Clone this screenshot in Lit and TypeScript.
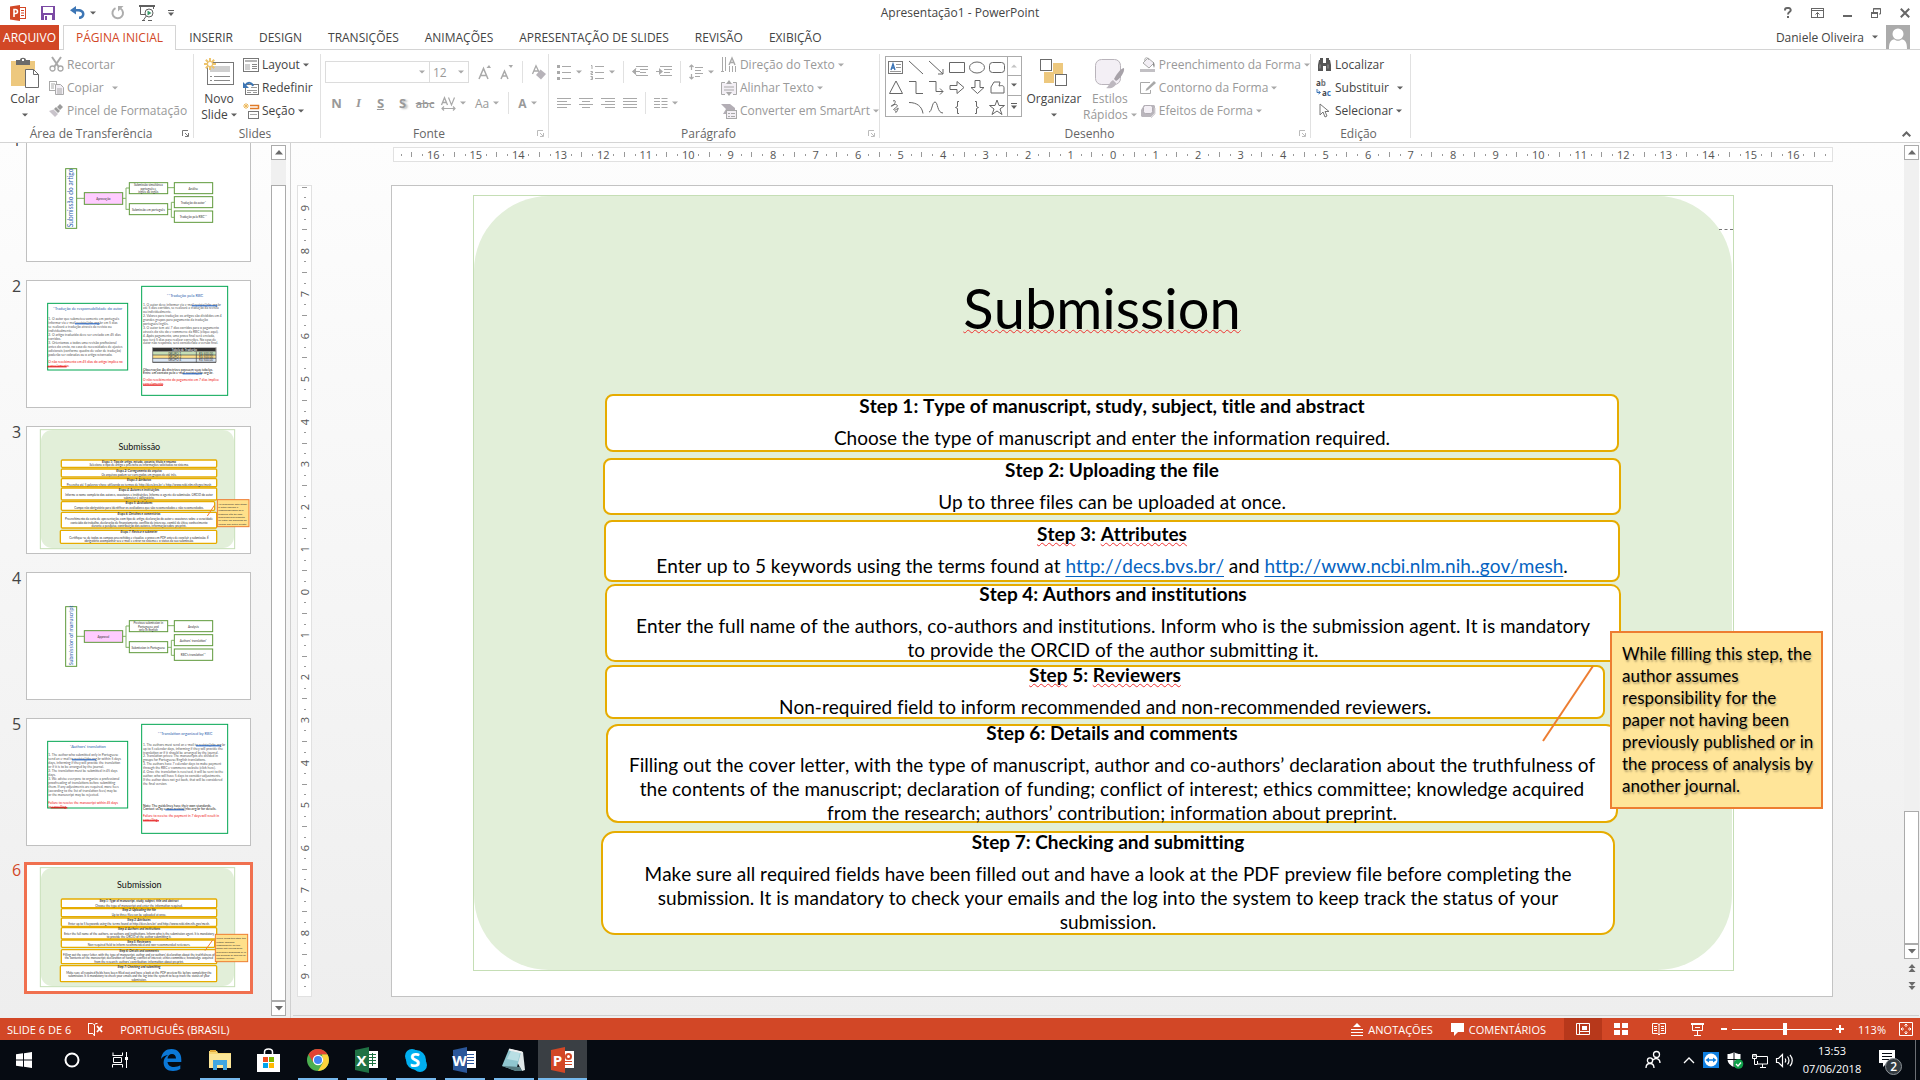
import { LitElement, html, svg, css, nothing } from "lit";
import { customElement, property, state } from "lit/decorators.js";
import { classMap } from "lit/directives/class-map.js";
import { styleMap } from "lit/directives/style-map.js";

/* ------------------------------------------------------------------ icons */

const G = "#a9a9a9";
const D = "#5f5f5f";

type Glyph = [number, number, unknown];

const line = (d: string, c = D, w = 1) => svg`<path d=${d} fill="none" stroke=${c} stroke-width=${w}/>`;
const area = (d: string, c = D) => svg`<path d=${d} fill=${c}/>`;
const rect = (x: number, y: number, w: number, h: number, c = D) =>
  svg`<rect x=${x} y=${y} width=${w} height=${h} fill=${c}/>`;
const frame = (x: number, y: number, w: number, h: number, c = D, f = "#fff") =>
  svg`<rect x=${x + 0.5} y=${y + 0.5} width=${w - 1} height=${h - 1} fill=${f} stroke=${c}/>`;

const officeTile = (c: string, inner: unknown) => svg`
  ${frame(12, 5, 12, 17, "#fff", "#fff")}
  ${inner}
  <path d="M1 4 15 1v26L1 24z" fill=${c}/>`;

const ICONS: Record<string, Glyph> = {
  ppt: [16, 16, svg`${rect(8, 2, 8, 12, "#d24726")}${rect(9, 3, 6, 10, "#fff")}${area("M0 1.600 10 0v16L0 14.400z", "#d24726")}
    ${line("M4 12V4.500h1.500a2 2 0 0 1 0 4H4", "#fff", 1.6)}${line("M11 5.500h3M11 8h3M11 10.500h3", "#d24726")}`],
  save: [14, 14, svg`${area("M0 0h14v14H0z", "#7b4aa4")}${rect(2, 1, 10, 6, "#fff")}${rect(3, 9, 8, 5, "#fff")}${rect(4, 10, 2, 4, "#7b4aa4")}`],
  undo: [15, 13, svg`${area("M6 0v3h2c4 0 6.500 2 6.500 5S12 13 9 13v-2.500c2 0 3-1 3-2.500S10.500 5.500 8 5.500H6v3L0 4.200z", "#3d76b5")}`],
  redo: [13, 13, svg`${line("M4.500 2.200A5.300 5.300 0 1 0 9.500 2.500", "#adadad", 2)}${area("M7 0h5.500L7 5.500z", "#adadad")}`],
  show: [16, 16, svg`${rect(0, 0, 16, 2)}${line("M1.500 2v7.500H6M14.500 2v2M8 10l-3.500 5M3 15.500h3M9 15.500h4")}
    <circle cx="10" cy="8" r="4" fill="#fff" stroke=${D}/>${area("M8.500 5.500v5l4-2.500z", "#3c9a6b")}`],
  customize: [6, 6, svg`${rect(0, 0, 6, 1)}${area("M0 2.500h6L3 6z")}`],
  caret: [6, 4, svg`${area("M0 .5h6L3 3.500z")}`],
  caretG: [6, 4, svg`${area("M0 .5h6L3 3.500z", G)}`],
  caretUp: [6, 4, svg`${area("M0 3.500h6L3 .5z", "#c4c4c4")}`],
  up: [8, 5, svg`${area("M4 0 8 4.500H0z", "#6a6a6a")}`],
  down: [8, 5, svg`${area("M4 4.500 8 0H0z", "#6a6a6a")}`],
  pageUp: [8, 8, svg`${area("M4 0 7.500 4h-7zM4 4l3.500 4h-7z", "#6a6a6a")}`],
  pageDown: [8, 8, svg`${area("M4 4 7.500 0h-7zM4 8l3.500-4h-7z", "#6a6a6a")}`],
  help: [8, 11, svg`${line("M1 3.500V3a2 2 0 0 1 2-2h2a2 2 0 0 1 1 3.500C4.500 5.500 4 6 4 7.500", "#666", 2)}${rect(3, 9, 2, 2, "#666")}`],
  ribbonOpt: [13, 10, svg`${frame(0, 0, 13, 10, "#666")}${line("M0 2.500h13M6.500 9V4.500M4.500 6.500l2-2 2 2", "#666")}`],
  minimize: [9, 10, svg`${rect(0, 7, 9, 2, "#666")}`],
  restore: [10, 10, svg`${line("M2.500 4V.5h7v5.500H8M2 1h8", "#666")}${frame(0, 4, 7, 6, "#666")}${rect(0, 4, 7, 2, "#666")}`],
  close: [10, 10, svg`${line("M.8.8l8.400 8.400M9.200.8.8 9.200", "#666", 2)}`],
  avatar: [24, 24, svg`${rect(0, 0, 24, 24, "#ababab")}<circle cx="12" cy="9" r="5.500" fill="#fff"/>${area("M3 24c0-7 2-9.500 5.500-9.500 2 1.800 5 1.800 7 0C19 14.500 21 17 21 24z", "#fff")}`],
  collapse: [9, 6, svg`${line("M.7 5.300 4.500 1.500l3.800 3.800", "#666", 2)}`],
  launcher: [7, 7, svg`${line("M.5 6V.5H6", "#777")}${line("M3 3l3 3M6.500 3v3.500H3", "#777")}`],
  launcherG: [7, 7, svg`${line("M.5 6V.5H6", "#bbb")}${line("M3 3l3 3M6.500 3v3.500H3", "#bbb")}`],
  paste: [28, 30, svg`${area("M0 3h24v25H0z", "#edc87e")}${area("M5 2h4c0-3 6-3 6 0h4v5H5z", "#6b6b6b")}${rect(11, 1, 2, 2, "#fff")}
    ${area("M14.500 11.500h8l5 5v13h-13z", "#fff")}${line("M14.500 11.500h8l5 5v13h-13zM22.500 11.500v5h5", "#6b6b6b")}`],
  cut: [15, 15, svg`${line("M3 0l6.500 9.500M12 0 5.500 9.500", G, 2)}<circle cx="3.500" cy="11.500" r="2.500" fill="none" stroke=${G} stroke-width="1.300"/><circle cx="11.500" cy="11.500" r="2.500" fill="none" stroke=${G} stroke-width="1.300"/>`],
  copy: [15, 14, svg`${frame(0, 0, 8, 10, G)}${area("M6.500 3.500h5l3 3v7h-8z", "#f3eff5")}${line("M6.500 3.500h5l3 3v7h-8zM8 8h5M8 10h5M8 12h5M2 3h4M2 5h3M2 7h3", G)}`],
  brush: [15, 13, svg`${area("M11 0l3 3-3 3-3-3zM7 3l4 4-2 2-4-4z", "#9b9b9b")}${area("M4.500 5.500 9 10l-3 3-6-6z", "#c9c4cb")}`],
  newSlide: [30, 27, svg`${frame(3, 4, 27, 23, "#777")}${rect(6, 8, 20, 6, "#cfcfcf")}${line("M6 18.500h2M10 18.500h16M6 22.500h2M10 22.500h16", "#8a8a8a")}
    ${line("M6 0v12M0 6h12M1.800 1.800l8.400 8.400M10.200 1.800l-8.400 8.400", "#edc46d", 2)}<circle cx="6" cy="6" r="2" fill="#fff"/>`],
  layout: [16, 14, svg`${frame(0, 0, 16, 14, "#777")}${rect(2, 2, 12, 2, "#b5b5b5")}${rect(2, 6, 5, 6, "#cfcfcf")}${line("M9 6.500h5M9 8.500h5M9 10.500h5", "#888")}`],
  reset: [16, 14, svg`${frame(2, 3, 14, 11, "#777")}${line("M8 6.500h6M4 9.500h10M4 11.500h4M10 11.500h4", "#999")}${line("M10 5C9 1.500 5 .5 2.500 4", "#3d76b5", 2)}${area("M0 1v6h6z", "#3d76b5")}`],
  section: [16, 16, svg`${line("M3 0v6M0 3h6M1 1l4 4M5 1 1 5", "#edb95d")}${line("M7 2.500h8.500v3H7", "#e07b29", 1.5)}${frame(5, 8, 11, 8, "#777")}${line("M7 11.500h7", "#aaa")}`],
  growA: [13, 15, svg`${line("M1 14 5.500 3.500 10 14M2.600 10.500h5.800", G, 1.500)}${area("M8.500 3 11 0l2 3z", G)}`],
  shrinkA: [13, 15, svg`${line("M1 14 4.500 6 8 14M2.200 11h4.600", G, 1.500)}${area("M8.500 0H13l-2 3z", G)}`],
  eraser: [14, 15, svg`${line("M.5 9 4 .8 7 7M2 6h4", G, 1.300)}${area("M8.500 4.500 14 9l-5 5.500L4 10z", "#b7b3b9")}`],
  spacingAV: [15, 13, svg`${line("M.5 8 3.500.8 6.500 8M1.500 5.500h4", G, 1.300)}${line("M7.500.5l3 7.500 3-7.500M1 11.500h13M3 9.500l-2 2 2 2M12 9.500l2 2-2 2", G, 1.200)}`],
  bullets: [14, 15, svg`${rect(0, 0, 3, 3, G)}${rect(0, 6, 3, 3, G)}${rect(0, 12, 3, 3, G)}${line("M5 1.500h9M5 7.500h9M5 13.500h9", G)}`],
  numbers: [14, 15, svg`${line("M1 .5h1V4M.5 6.500h2V8H1v1.500h2M.5 11.500h2v3h-2M1 13h1.500M5 1.500h9M5 7.500h9M5 13.500h9", G)}`],
  outdent: [16, 12, svg`${line("M4 .5h12M8 3.500h8M8 6.500h6M4 9.500h12M8 5.500H1M4 2.500l-3 3 3 3", G)}${area("M0 5.500 4 2v7z", G)}`],
  indent: [16, 12, svg`${line("M4 .5h12M8 3.500h8M8 6.500h6M4 9.500h12M0 5.500h6", G)}${area("M7 5.500 3 2v7z", G)}`],
  lineSpace: [14, 16, svg`${line("M6 3.500h8M6 6.500h6M6 9.500h8M6 12.500h5", G)}${line("M2.500 1v5M2.500 10v5M.5 3l2-2 2 2M.5 13l2 2 2-2", G, 1.200)}`],
  alignL: [14, 11, line("M0 .5h14M0 3.500h10M0 6.500h14M0 9.500h10", G)],
  alignC: [14, 11, line("M0 .5h14M3 3.500h8M0 6.500h14M3 9.500h8", G)],
  alignR: [14, 11, line("M0 .5h14M4 3.500h10M0 6.500h14M4 9.500h10", G)],
  alignJ: [14, 11, line("M0 .5h14M0 3.500h14M0 6.500h14M0 9.500h14", G)],
  columns: [13, 11, line("M0 .5h6M0 3.500h6M0 6.500h6M0 9.500h6M7.500 .5h6M7.500 3.500h6M7.500 6.500h6M7.500 9.500h6", G)],
  textDir: [16, 16, svg`${line("M1.500 0v14M4.500 0v14M0 14.500h3M8.500 9v6M11.500 9v6M14.500 9v6", G)}${line("M8 8l3-7 3 7M9 5.500h4", G, 1.400)}`],
  alignText: [16, 16, svg`${rect(1, 3, 14, 11, "#f3eff5")}${line("M4 2.500H.5v12H4M12 2.500h3.500v12H12M3 7h10M3 10h10", G)}${area("M8 0l3 4H5zM8 16l3-4H5z", G)}`],
  smartArt: [16, 16, svg`${area("M0 1h9l5 4v2H5v4H2L5 6z", "#b3aeb5")}${frame(5, 7, 11, 9, G, "#f3eff5")}${line("M7 10.500h2M10 10.500h4M7 13.500h2M10 13.500h4", G)}`],
  arrange: [27, 28, svg`${rect(13, 5, 10, 11, "#edc87e")}${rect(4, 14, 10, 11, "#edc87e")}${frame(0, 1, 12, 12, "#6b6b6b")}${frame(15, 16, 12, 12, "#6b6b6b")}`],
  styles: [30, 30, svg`<rect x=".5" y="1.500" width="25" height="25" rx="6" fill="#f3eff5" stroke="#b9b4bb"/>
    ${area("M29 10c1 4-4 11-8 13l-2-2c2-4 6-10 10-11z", "#a7a2a9")}${area("M18 22l3 3c0 4-5 6-10 5 3-1 3-6 7-8z", "#bdb8bf")}`],
  fill: [16, 15, svg`${area("M8 1l6 5-5 5-6-5z", "#f3eff5")}${line("M3 6l5-5 6 5-5 5zM5 4C4 1 7-1 9 3", G)}${area("M13 5c2 1 2 4 1 6l-1-3z", "#8d8d8d")}${rect(0, 12, 15, 3, "#c2c0c4")}`],
  outline: [16, 13, svg`${line("M10 1.500H.5v11h10V9", G)}${area("M14 0l2 2-8 7-2.500 1L6.500 7.500z", G)}`],
  effects: [16, 14, svg`${area("M4 1h10l1 1v7l-4 4H2l-1-1V6z", "#bab6bc")}<rect x="3.500" y="1.500" width="9" height="8" rx="2" fill="#f3eff5" stroke="#b0abb2"/>${line("M15 4v6l-4 4", "#d5d2d7")}`],
  find: [15, 13, svg`${area("M2 2h4v3h3V2h4l1 5v6H9V8H6v5H1V7z", "#555")}${rect(3, 0, 3, 2, "#555")}${rect(9, 0, 3, 2, "#555")}${line("M3 6.500v4M11 6.500v4", "#999")}`],
  replace: [16, 16, svg`
    <text x="0" y="6" font-size="8" font-weight="700" fill="#444">a<tspan fill="#777">b</tspan></text>
    <text x="6" y="16" font-size="8" font-weight="700" fill="#444">a<tspan fill="#3a73b5">c</tspan></text>${line("M1 9v3.500h3M2.500 11l2 1.500-2 1.500", "#3a73b5")}`],
  select: [11, 15, svg`<path d="M1 1v11l3-3 2 5 2-1-2-4.500h4z" fill="#fff" stroke="#777"/>`],
  proof: [15, 15, svg`${line("M.5 1.500h4l2 1.500 1-1.500h2M6.500 3v11M.5 1v10.500h4.500L6.500 14", "#fff")}${line("M9 4l5 6M14 4 9 10", "#fff", 1.800)}`],
  notes: [12, 13, svg`${area("M6 0l4 4H2z", "#fff")}${line("M0 6.500h12M0 9.500h12M0 12.500h12", "#fff")}`],
  comments: [13, 13, svg`${area("M0 0h13v9H7l-4 4V9H0z", "#fff")}`],
  normal: [14, 12, svg`${line("M.5.5h13v11H.5zM3.500 0v12M4 8.500h10", "#fff")}${rect(6, 3, 5, 4, "#fff")}`],
  sorter: [14, 12, svg`${rect(0, 0, 6, 5, "#fff")}${rect(8, 0, 6, 5, "#fff")}${rect(0, 7, 6, 5, "#fff")}${rect(8, 7, 6, 5, "#fff")}`],
  reading: [14, 12, svg`${line("M.5.5h5l1.500 1 1.500-1h5v10h-5L7 12l-1.500-1.500h-5zM7 1v11M2 3.500h3M2 5.500h3M2 7.500h3M9 3.500h3M9 5.500h3M9 7.500h3", "#fff")}`],
  slideshow: [13, 13, svg`${rect(0, 0, 13, 2, "#fff")}${line("M1.500 2v5.500h10V2M6.500 7.500V12M3 12.500h7M4 4.500h5", "#fff")}`],
  fit: [14, 14, svg`${line("M.5.5h13v13H.5zM7 2v3M7 9v3M2 7h3M9 7h3M5.500 3.500 7 2l1.500 1.500M5.500 10.500 7 12l1.500-1.500M3.500 5.500 2 7l1.500 1.500M10.500 5.500 12 7l-1.500 1.500", "#fff")}`],
  windows: [16, 16, area("M0 2.300 7 1.300v6.200H0zM8 1.200 16 0v7.500H8zM0 8.500h7v6.200l-7-1zM8 8.500h8V16l-8-1.200z", "#fff")],
  cortana: [16, 16, svg`<circle cx="8" cy="8" r="6.500" fill="none" stroke="#fff" stroke-width="2"/>`],
  taskview: [17, 16, svg`${line("M1 3.500V.5M10.500.5v3M.5 3.500h10M1.500 5.500h8v5h-8zM.5 15.500v-3h10v3M14.500 0v16", "#fff")}${rect(13, 5, 3, 3, "#fff")}`],
  edge: [22, 22, area("M1 10C2 3 6 0 11.500 0 18 0 21.500 5 21.300 10.500V13H7.500c.2 3 3 5 6.500 5 2.500 0 4.500-.7 6.300-1.700V20c-2 1.300-4.500 2-7.300 2C7 22 3.600 18.500 3.600 13.500c0-3 1.500-5.700 4.400-7.500C5 6.500 2.500 7.500 1 10zm6.500-.5H16C16 7 14.500 5 12 5S7.800 7 7.500 9.500z", "#0b78d7")],
  explorer: [22, 20, svg`${area("M0 1h8l1 2h13v15H0z", "#f6d774")}${rect(1, 0, 6, 2, "#e3ab3a")}${rect(0, 4, 22, 14, "#fbe697")}${area("M4 10h14v10h-4v-5H8v5H4z", "#3fa7e0")}`],
  store: [23, 24, svg`${line("M7.500 7V4c0-4 8-4 8 0v3", "#fff", 1.500)}${rect(0, 6, 23, 18, "#fff")}${rect(6, 9, 5, 5, "#f25022")}${rect(12, 9, 5, 5, "#7fba00")}${rect(6, 15, 5, 5, "#00a4ef")}${rect(12, 15, 5, 5, "#ffb900")}`],
  chrome: [22, 22, svg`<circle cx="11" cy="11" r="11" fill="#4caf50"/>${area("M11 0a11 11 0 0 1 9.500 5.500H11L6 13 1.500 5.500A11 11 0 0 1 11 0z", "#e14334")}${area("M20.500 5.500A11 11 0 0 1 11 22l5-8.500L15 5.500z", "#fdd33c")}<circle cx="11" cy="11" r="5.200" fill="#fff"/><circle cx="11" cy="11" r="4" fill="#4285f4"/>`],
  excel: [26, 28, officeTile("#1f7244", svg`${line("M15 8.500h7M15 11.500h7M15 14.500h7M15 17.500h7M18.500 7v13", "#1f7244")}`)],
  word: [26, 28, officeTile("#2b579a", svg`${line("M15 8.500h7M15 11.500h7M15 14.500h7M15 17.500h7", "#2b579a")}`)],
  pptBig: [26, 28, officeTile("#d24726", svg`<circle cx="18.500" cy="10.500" r="2.500" fill="none" stroke="#d24726" stroke-width="2"/>${line("M15 15.500h7M15 18.500h7", "#d24726")}`)],
  skype: [24, 24, svg`<circle cx="8" cy="8" r="7" fill="#00aff0"/><circle cx="16" cy="17" r="7" fill="#00aff0"/><circle cx="12" cy="12" r="10" fill="#00aff0"/>`],
  notepad: [23, 24, svg`${area("M8 1l13 3 2 18-3 1z", "#dfe7e8")}${area("M7 1l12 3-5 19L0 18z", "#8fc6cf")}${area("M9 3l9 2-2 8L5 11z", "#b9dfe4")}${area("M0 18l14 5 6 0-2-4z", "#557a80")}${line("M7 1.500l13 3", "#eee", 2)}`],
  people: [16, 18, svg`<circle cx="11.500" cy="3.500" r="3" fill="none" stroke="#fff" stroke-width="1.300"/><circle cx="5" cy="9.500" r="2.600" fill="none" stroke="#fff" stroke-width="1.300"/>${line("M1 17c0-6 8-6 8 0M8 9c3-3 7-1 7 3", "#fff", 1.300)}`],
  chevron: [12, 8, line("M1 7l5-5 5 5", "#fff", 1.300)],
  teamviewer: [16, 16, svg`${rect(0, 0, 16, 16, "#0e7fe1")}<circle cx="8" cy="8" r="6.500" fill="#fff"/>${area("M2.500 8 6 5.500v1.700h4V5.500L13.500 8 10 10.500V8.800H6v1.700z", "#0e7fe1")}`],
  defender: [17, 17, svg`${area("M7 0c2 1.500 4 2 6.500 2v5c0 4-3 6.500-6.500 8C3.500 13.500.5 11 .5 7V2C3 2 5 1.500 7 0z", "#fff")}${line("M7 0v15M0 7.500h14", "#070c13")}<circle cx="11.500" cy="12" r="4.800" fill="#10a04a"/>${line("M9 12l2 2 3-3.500", "#fff", 1.300)}`],
  network: [16, 15, svg`${line("M5 3.500h10.500v7.500H5.500V8M8 14.500h6M10.500 11v3M.5 1.500h4v4h-4zM2.500 6v5.500h3M1 3h3", "#fff")}`],
  volume: [18, 13, svg`${line("M.5 4.500h2l4-4v12l-4-4h-2zM9 4.500q1.500 2 0 4M11.500 2.500q3 4 0 8M14 .8q4.500 5.700 0 11.400", "#fff", 1.200)}`],
  action: [24, 26, svg`${area("M1 1h16v13H9l-4 4v-4H1z", "#fff")}${line("M4 4.500h10M4 7.500h10M4 10.500h7", "#070c13")}<circle cx="15.500" cy="17.500" r="8" fill="#333a40" stroke="#8e9499"/>`],
};

const icon = (name: string) => {
  const [w, h, body] = ICONS[name];
  return html`<svg class="icon" width=${w} height=${h} viewBox="0 0 ${w} ${h}" aria-hidden="true">${body}</svg>`;
};

const SHAPES: unknown[] = [
  svg`${frame(1, 3, 15, 13, "#777")}${line("M4 12l2-6 2 6M4.500 10h3", "#3a73b5", 1.400)}${line("M9 6.500h5M9 9.500h5M3 13.500h11", "#999")}`,
  line("M2 3l14 13", "#666"),
  svg`${line("M2 3l14 13M16 11v5h-5", "#666")}`,
  line("M1.500 4.500h15v10h-15z", "#666"),
  svg`<ellipse cx="9" cy="9.500" rx="7.500" ry="5.500" fill="none" stroke="#666"/>`,
  svg`<rect x="1.500" y="4.500" width="15" height="10" rx="3" fill="none" stroke="#666"/>`,
  line("M9 3l6.500 12.500h-13z", "#666"),
  line("M2 3.500h7v12h7", "#666"),
  line("M2 3.500h7v10h7M13 10.500l3 3-3 3", "#666"),
  line("M2 7.500h7v-4l7 6-7 6v-4H2z", "#666"),
  line("M7 2.500h5v7h4l-6.500 6-6.500-6h4z", "#666"),
  line("M3 14.500V9l3-5h6L11 8c4-1 5 0 5 2v5H3z", "#666"),
  line("M6 3c4-2 2 4-1 5s3-3 5-1-5 4-3 5 5-4 4-1-3 5-2 2", "#666"),
  line("M2 4.500c8 0 13 4 14 11", "#666"),
  line("M2 14c3 0 3-10 6-10s2 11 8 11", "#666"),
  line("M11 3.500H9.500v5L7.500 9.500l2 1v5H11", "#666"),
  line("M7 3.500h1.500v5l2 1-2 1v5H7", "#666"),
  line("M9 2l2 5.500h5.500L12 11l2 5.500-5-3.500-5 3.500L6 11 1.500 7.500H7z", "#666"),
];

/* ------------------------------------------------------------- slide data */

interface Run { t: string; kind?: "link" | "spell" | "bold" }
type Line = Run[];
interface Step { x: number; y: number; w: number; h: number; r: number; title: Line; body: Line[] }

const T = (t: string): Line => [{ t }];

/* The canvas coordinates count from the top left corner of the slide. */
const SLIDE_W = 1440;
const SLIDE_H = 810;

const STEPS: Step[] = [
  { x: 213, y: 208, w: 1014, h: 58, r: 8, title: T("Step 1: Type of manuscript, study, subject, title and abstract"),
    body: [T("Choose the type of manuscript and enter the information required.")] },
  { x: 211, y: 272, w: 1018, h: 57, r: 8, title: T("Step 2: Uploading the file"),
    body: [T("Up to three files can be uploaded at once.")] },
  { x: 212, y: 334, w: 1016, h: 62, r: 8, title: [{ t: "Step", kind: "spell" }, { t: " 3: " }, { t: "Attributes", kind: "spell" }],
    body: [[{ t: "Enter up to 5 keywords using the terms found at " }, { t: "http://decs.bvs.br/", kind: "link" }, { t: " and " },
      { t: "http://www.ncbi.nlm.nih..gov/mesh", kind: "link" }, { t: "." }]] },
  { x: 213, y: 398, w: 1016, h: 78, r: 10, title: T("Step 4: Authors and institutions"),
    body: [T("Enter the full name of the authors, co-authors and institutions. Inform who is the submission agent. It is mandatory"),
      T("to provide the ORCID of the author submitting it.")] },
  { x: 213, y: 479, w: 1000, h: 54, r: 8, title: [{ t: "Step", kind: "spell" }, { t: " 5: " }, { t: "Reviewers", kind: "spell" }],
    body: [[{ t: "Non-required field to inform recommended and non-recommended reviewers" }, { t: ".", kind: "bold" }]] },
  { x: 214, y: 538, w: 1012, h: 99, r: 12, title: T("Step 6: Details and comments"),
    body: [T("Filling out the cover letter, with the type of manuscript, author and co-authors’ declaration about the truthfulness of"),
      T("the contents of the manuscript; declaration of funding; conflict of interest; ethics committee; knowledge acquired"),
      T("from the research; authors’ contribution; information about preprint.")] },
  { x: 209, y: 645, w: 1014, h: 104, r: 14, title: T("Step 7: Checking and submitting"),
    body: [T("Make sure all required fields have been filled out and have a look at the PDF preview file before completing the"),
      T("submission. It is mandatory to check your emails and the log into the system to keep track the status of your"),
      T("submission.")] },
];

const NOTE = ["While filling this step, the", "author assumes", "responsibility for the", "paper not having been", "previously published or in",
  "the process of analysis by", "another journal."];

const place = (x: number, y: number, w: number, h: number) => ({
  left: `${(x / SLIDE_W) * 100}%`,
  top: `${(y / SLIDE_H) * 100}%`,
  width: `${(w / SLIDE_W) * 100}%`,
  height: `${(h / SLIDE_H) * 100}%`,
});

/* -------------------------------------------------------------- thumbnails */

interface MiniBox { x: number; y: number; w: number; h: number; title: string; lines: string[] }

const miniSteps = (title: string, boxes: MiniBox[], note: { x: number; y: number; w: number; h: number; lines: string[] }, stroke: string) => svg`
  <rect x="43" y="11" width="583" height="357" fill="#fff" stroke="#c5deb5" stroke-width="3"/>
  <rect x="45" y="12" width="579" height="354" rx="34" fill="#e2efd9"/>
  <text class="m-title" x="340" y="72">${title}</text>
  ${boxes.map((b) => svg`
    <rect x=${b.x} y=${b.y} width=${b.w} height=${b.h} rx="3" fill="#fff" stroke="#e6ac00" stroke-width="4"/>
    <text class="m-head" x="339" y=${b.y + 8}>${b.title}</text>
    ${b.lines.map((l, i) => svg`<text class="m-mid" x="339" y=${b.y + b.h - 3 - (b.lines.length - 1 - i) * 10}>${l}</text>`)}`)}
  <path d=${stroke} stroke="#ed7d31" stroke-width="3" fill="none"/>
  <rect x=${note.x} y=${note.y} width=${note.w} height=${note.h} fill="#ffe08a" stroke="#ed7d31" stroke-width="3"/>
  ${note.lines.map((l, i) => svg`<text class="m-note" x=${note.x + 3} y=${note.y + 15 + i * 10}>${l}</text>`)}`;

const flat = (l: Line) => l.map((r) => r.t).join("");
const MINI6: [number, number, number, number][] = [
  [106, 105, 466, 26], [106, 134, 466, 24], [106, 162, 466, 25], [106, 191, 466, 34], [106, 228, 460, 22], [106, 257, 466, 42], [103, 305, 469, 48]];
const thumb6 = miniSteps("Submission",
  STEPS.map((s, i) => ({ x: MINI6[i][0], y: MINI6[i][1], w: MINI6[i][2], h: MINI6[i][3], title: flat(s.title), lines: s.body.map(flat) })),
  { x: 568, y: 211, w: 97, h: 82, lines: NOTE }, "M560 228 537 260");

const thumb3 = miniSteps("Submissão", [
  { x: 106, y: 102, w: 466, h: 22, title: "Etapa 1: Tipo de artigo, estudo, assunto, título e resumo", lines: ["Selecione o tipo de artigo e preencha as informações solicitadas no sistema."] },
  { x: 106, y: 129, w: 466, h: 24, title: "Etapa 2: Carregamento do arquivo", lines: ["Os arquivos podem ser carregados em grupos de até três."] },
  { x: 106, y: 158, w: 466, h: 24, title: "Etapa 3: Atributos", lines: ["Preencha até 5 palavras-chave utilizando os termos de http://decs.bvs.br/ e http://www.ncbi.nlm.nih.gov/mesh"] },
  { x: 106, y: 186, w: 466, h: 36, title: "Etapa 4: Autores e instituições", lines: ["Informe o nome completo dos autores, coautores e instituições. Informe o agente da submissão. ORCID do autor", "submeter é obrigatório."] },
  { x: 106, y: 227, w: 460, h: 26, title: "Etapa 5: Avaliadores", lines: ["Campo não obrigatório para identificar os avaliadores que são recomendados e não recomendados."] },
  { x: 106, y: 259, w: 466, h: 47, title: "Etapa 6: Detalhes e comentários", lines: ["Preenchimento da carta de apresentação, com tipo de artigo, declaração do autor e coautores sobre a veracidade", "conteúdo do trabalho, declaração de financiamento, conflito de interesse, comitê de ética, conhecimento", "durante a pesquisa, contribuição dos autores, informação sobre preprint."] },
  { x: 103, y: 313, w: 469, h: 39, title: "Etapa 7: Revisar e submeter", lines: ["Certifique-se de todos os campos preenchidos e visualize a prova em PDF antes de concluir a submissão. É", "obrigatório acompanhar seu e-mail e entrar no sistema e o status da sua submissão."] },
], { x: 574, y: 221, w: 95, h: 81, lines: ["Ao preencher esta etapa,", "o autor assume a", "responsabilidade de o", "trabalho não ter sido", "publicado previamente", "ou estar em processo de", "análise por outra revista."] }, "M566 237 544 270");

const miniFlow = (side: string, sideClass: string, a: string, b: string[], c: string[], d: string, e: string[], f: string[]) => {
  const box = (x: number, y: number, h: number, lines: string[], fill = "#fff") => svg`
    <rect x=${x} y=${y} width="115" height=${h} fill=${fill} stroke="#5f9a3b" stroke-width="3"/>
    ${lines.map((l, i) => svg`<text class="m-mid" x=${x + 57} y=${y + h / 2 + 4 + (i - (lines.length - 1) / 2) * 10}>${l}</text>`)}`;
  return svg`
    <path d="M153 193h22M290 193h10M300 162v65M300 162h10M300 226h10M425 161h20M425 226h11M436 205v45M436 205h9M436 250h9" stroke="#82b366" stroke-width="3" fill="none"/>
    <rect x="119" y="104" width="33" height="179" fill="#fff" stroke="#5f9a3b" stroke-width="3"/>
    <text class=${sideClass} transform="translate(141 280) rotate(-90)">${side}</text>
    ${box(175, 176, 35, [a], "#ffccff")}${box(310, 146, 33, b)}${box(445, 146, 33, c)}${box(310, 209, 33, [d])}${box(445, 188, 33, e)}${box(445, 231, 34, f)}`;
};

type Row = [number, string, string?];
const miniPages = (lt: string, left: Row[], rt: string, right: Row[], extra: unknown = nothing) => svg`
  <rect x="65" y="70" width="240" height="200" fill="#fff" stroke="#00a651" stroke-width="3"/>
  <rect x="347" y="19" width="258" height="327" fill="#fff" stroke="#00a651" stroke-width="3"/>
  <text class="m-blue" x="185" y="91">${lt}</text>
  <text class="m-blue" x="477" y="52">${rt}</text>
  ${left.map(([y, t, k]) => svg`<text class="m-line ${k ?? ""}" x="67" y=${y}>${t}</text>`)}
  ${right.map(([y, t, k]) => svg`<text class="m-line ${k ?? ""}" x="351" y=${y}>${t}</text>`)}
  ${extra}`;

const mark = (x: number, y: number, w: number, c = "#1159c2") => svg`<rect x=${x} y=${y} width=${w} height="3" fill=${c}/>`;

const thumb5 = miniPages("*Authors’ translation", [
  [113, "1. The author who submitted only in Portuguese"], [125, "send an e-mail to revista@rbc.org.br within 5 days"], [137, "days, informing if they will provide the translation"],
  [149, "or if it is to be arranged by the journal."], [161, "2. The translation must be submitted in 45 days"], [173, "days."], [185, "3. We advise everyone to organize a professional"],
  [197, "proofreading of translations before submitting"], [209, "them. If any adjustments are required, more fees"], [221, "(according to the list of translation fees) may be"],
  [233, "or the manuscript may be rejected."], [257, "Failure to receive the manuscript within 45 days", "red"], [269, "in cancelling.", "red"]],
  "**Translation organized by RBC", [
  [83, "1. The authors must send an e-mail to revista@rbc.org.br"], [95, "up to 5 calendar days, informing if they will provide the"], [107, "translation or if it should be arranged by the journal."],
  [117, "2. Translation prices: The manuscripts are divided in"], [128, "groups for Portuguese/English translations."], [140, "3. The authors have 7 calendar days to make payment"],
  [152, "through the RBC e-commerce website (click here)."], [164, "4. Once the translation is received, it will be sent to the"], [176, "author, who will have 5 days to consider adjustments."],
  [188, "If the author does not get back, that will be considered"], [200, "the final version."], [266, "Note: The guidelines have their own standards.", "dark"],
  [276, "Contact us by e-mail revista@rbc.org.br for details.", "dark"], [297, "Failure to receive the payment in 7 days will result in", "red"], [308, "cancelling.", "red"]],
  svg`${mark(138, 124, 72)}${mark(510, 82, 75)}${mark(418, 274, 56)}${mark(74, 268, 50, "#e00000")}${mark(351, 307, 48, "#e00000")}`);

const thumb2 = miniPages("*Tradução de responsabilidade do autor", [
  [119, "1. O autor que submeteu somente em português"], [131, "informar via e-mail revista@rbc.org.br em 5 dias"], [143, "se realizará a tradução através da revista ou"],
  [155, "individualmente."], [167, "2. O artigo traduzido deve ser enviado em 45 dias"], [179, "corridos."], [191, "3. Orientamos a todos uma revisão profissional"],
  [203, "antes do envio, no caso de necessidades de ajustes"], [215, "adicionais (conforme quadro de valor de tradução)"], [227, "poderão ser cobradas ou o artigo retornado."],
  [248, "O não recebimento em 45 dias do artigo implica no", "red"], [260, "cancelamento.", "red"]],
  "**Tradução pela RBC", [
  [77, "1. O autor deve informar via e-mail revista@rbc.org.br"], [88, "até 5 dias corridos, se realizará a tradução da revista"], [100, "ou individualmente."], [110, "2. Valores para tradução: os artigos são divididos em 4"],
  [122, "grandes grupos para pagamento da tradução"], [134, "português/inglês."], [146, "3. O autor tem até 7 dias corridos para o pagamento"], [158, "através do site do e-commerce da RBC (clique aqui)."],
  [170, "4. Após pagamento, uma prova final será enviada,"], [182, "que terá 5 dias para realizar correções. No caso de"], [193, "autor não responda, será considerada a versão final."],
  [272, "Observação: As diretrizes possuem suas tabelas.", "dark"], [281, "Entre em contato pelo e-mail revista@rbc.org.br.", "dark"],
  [303, "O não recebimento do pagamento em 7 dias implica", "red"], [315, "cancelamento.", "red"]],
  svg`${mark(147, 130, 74)}${mark(498, 76, 76)}${mark(470, 280, 58)}${mark(64, 259, 58, "#e00000")}${mark(351, 314, 60, "#e00000")}
    <rect x="381" y="203" width="188" height="12" fill="#333"/><rect x="381" y="215" width="188" height="10" fill="#c5deb5"/><rect x="381" y="225" width="188" height="10" fill="#ffe08a"/><rect x="381" y="235" width="188" height="11" fill="#dbe6f3"/>
    <path d="M380 202v45h190v-45M380 225h190M380 235h190M380 247h190M511 215v32" fill="none" stroke="#444" stroke-width="2"/>
    <text class="m-mid white" x="475" y="213">Tabela de Tradução</text>
    ${["GRUPO 1", "GRUPO 2", "GRUPO 4"].map((g, i) => svg`<text class="m-mid" x="446" y=${224 + i * 10}>${g}</text><text class="m-mid" x="540" y=${224 + i * 10}>R$ 500,00</text>`)}`);

const THUMBS: [number, unknown][] = [
  [1, miniFlow("Submissão do artigo", "m-side", "Aprovação", ["Submissão simultânea", "português e", "inglês ou inglês"], ["Análise"], "Submissão em português", ["Tradução do autor*"], ["Tradução pela RBC**"])],
  [2, thumb2],
  [3, thumb3],
  [4, miniFlow("Submission of manuscript", "m-side tight", "Approval", ["Previous submission in", "Portuguese and", "only in English"], ["Analysis"], "Submission in Portuguese", ["Authors’ translation*"], ["RBC’s translation**"])],
  [5, thumb5],
  [6, thumb6],
];

/* ------------------------------------------------------------ shared style */

const base = css`
  * { box-sizing: border-box; }
  button, select, input { font: inherit; color: inherit; background: none; border: 0; padding: 0; margin: 0; }
  button { display: flex; align-items: center; justify-content: center; white-space: nowrap; }
  a { color: inherit; text-decoration: none; }
  .icon { display: block; flex: none; overflow: visible; }
`;

/* --------------------------------------------------------------- title bar */

@customElement("title-bar")
class TitleBar extends LitElement {
  static styles = [base, css`
    :host { display: grid; grid-template-columns: 1fr auto 1fr; align-items: center; height: 25px; padding: 0 10px; }
    .quick, .system { display: flex; align-items: center; height: 22px; }
    .quick { gap: 15px; }
    .quick .pair { display: flex; align-items: center; gap: 5px; }
    .quick .wide { gap: 13px; }
    .system { justify-content: flex-end; gap: 19px; }
    h1 { margin: 0; font-size: 12px; font-weight: 400; line-height: 25px; }
  `];
  render() {
    return html`
      <nav class="quick" aria-label="Acesso rápido">
        ${icon("ppt")}
        <button aria-label="Salvar">${icon("save")}</button>
        <button class="pair" aria-label="Desfazer">${icon("undo")}${icon("caret")}</button>
        <button aria-label="Refazer">${icon("redo")}</button>
        <button class="pair wide" aria-label="Iniciar apresentação">${icon("show")}${icon("customize")}</button>
      </nav>
      <h1>Apresentação1 - PowerPoint</h1>
      <nav class="system" aria-label="Janela">
        ${[["help", "Ajuda"], ["ribbonOpt", "Opções da faixa"], ["minimize", "Minimizar"], ["restore", "Restaurar"], ["close", "Fechar"]]
          .map(([i, l]) => html`<button aria-label=${l}>${icon(i)}</button>`)}
      </nav>`;
  }
}

/* -------------------------------------------------------------------- tabs */

@customElement("ribbon-tabs")
class RibbonTabs extends LitElement {
  @state() private active = 0;
  static styles = [base, css`
    :host { display: flex; height: 25px; padding-right: 10px; border-bottom: 1px solid #d4d4d4; }
    button { font-size: 12px; height: 25px; padding: 0 12px 2px; border: 1px solid transparent; border-bottom: 0; }
    .file { background: #d24726; color: #fff; padding: 0 4px 2px; margin-right: 4px; width: 59px; }
    .active { color: #d24726; background: #fff; border-color: #d4d4d4; }
    .user { margin-left: auto; display: flex; align-items: center; gap: 8px; font-size: 12px; }
  `];
  render() {
    const tabs = ["PÁGINA INICIAL", "INSERIR", "DESIGN", "TRANSIÇÕES", "ANIMAÇÕES", "APRESENTAÇÃO DE SLIDES", "REVISÃO", "EXIBIÇÃO"];
    return html`
      <button class="file">ARQUIVO</button>
      ${tabs.map((t, i) => html`<button class=${classMap({ active: i === this.active })} @click=${() => (this.active = i)}>${t}</button>`)}
      <div class="user"><span>Daniele Oliveira</span>${icon("caret")}${icon("avatar")}</div>`;
  }
}

/* ------------------------------------------------------------------ ribbon */

@customElement("ribbon-bar")
class RibbonBar extends LitElement {
  static styles = [base, css`
    :host { display: grid; grid-template-columns: 194px 127px 228px 331px 431px 100px 1fr; height: 93px; padding-top: 4px;
      border-bottom: 1px solid #d4d4d4; font-size: 12px; }
    .group { display: flex; flex-direction: column; height: 84px; border-right: 1px solid #e1e1e1; }
    .body { flex: 1; display: flex; min-width: 0; }
    .foot { display: flex; align-items: center; height: 16px; color: #666; margin-bottom: -3px; padding-right: 4px; }
    .foot span { flex: 1; text-align: center; }
    .big { flex-direction: column; justify-content: flex-start; line-height: 16px; width: 48px; padding-top: 4px; }
    .big .art { height: 33px; display: flex; align-items: flex-start; }
    .big .caption { display: flex; align-items: center; gap: 3px; }
    .big > .icon { margin-top: 6px; }
    .rows { display: flex; flex-direction: column; margin-top: -1px; }
    .rows button { height: 23px; justify-content: flex-start; gap: 3px; }
    .rows .slot { width: 16px; display: flex; justify-content: center; }
    .off { color: #999; }
    .clip { padding-left: 2px; }
    .clip .big { width: 46px; }
    .slides { padding-left: 1px; }
    .tools { flex-direction: column; padding: 7px 0 0 4px; color: #999; }
    .line { display: flex; align-items: center; height: 22px; gap: 9px; }
    .line + .line { margin-top: 9px; }
    .combo { display: flex; align-items: center; height: 22px; border: 1px solid #dcdcdc; padding: 0 4px 0 3px; }
    .combo + .combo { margin-left: -10px; }
    .combo select { appearance: none; flex: 1; min-width: 0; height: 20px; }
    .combo.family { width: 105px; }
    .combo.size { width: 40px; }
    .rule { width: 1px; height: 22px; background: #e1e1e1; }
    .letter { width: 13px; font-size: 13px; }
    .bold { font-weight: 700; }
    .italic { font-family: "Liberation Serif", serif; font-style: italic; font-weight: 700; }
    .under { text-decoration: underline; font-weight: 700; }
    .shade { font-weight: 700; text-shadow: 2px 1px 2px #bbb; }
    .strike { text-decoration: line-through; font-size: 11px; font-weight: 600; width: 14px; }
    .drop { gap: 5px; }
    .font .marks { padding-left: 5px; }
    .font .marks .drop { gap: 4px; }
    .para { flex-direction: column; padding: 7px 0 0 8px; width: 170px; }
    .para .line { gap: 8px; }
    .gallery { display: flex; width: 137px; height: 61px; margin: 2px 0 0 5px; border: 1px solid #ababab; }
    .shapes { flex: 1; display: grid; grid-template-columns: repeat(6, 1fr); }
    .shapes button { height: 20px; }
    .more { width: 14px; display: grid; border-left: 1px solid #ababab; }
    .more button + button { border-top: 1px solid #ababab; }
    .draw .big { width: 56px; margin-left: 4px; }
    .draw .rows { padding-left: 2px; }
    .draw .big + .big { margin-left: 0; }
    .edit .rows { padding-left: 5px; }
    .end { display: flex; align-items: flex-end; justify-content: flex-end; padding: 0 9px 5px 0; }
    .chev { margin-left: 0; }
    .chev.apart { margin-left: 5px; }
  `];
  private rows(items: [string, string, string?][]) {
    return html`<div class="rows">${items.map(([i, t, c]) => html`
      <button><span class="slot">${icon(i)}</span>${t}${c ? html`<span class="chev ${c.includes("+") ? "apart" : ""}">${icon(c.replace("+", ""))}</span>` : nothing}</button>`)}</div>`;
  }
  private foot(name: string, launch = "") {
    return html`<div class="foot"><span>${name}</span>${launch ? html`<button aria-label="Mais opções de ${name}">${icon(launch)}</button>` : nothing}</div>`;
  }
  private tool(name: string, label: string, drop = false) {
    return html`<button class="drop" aria-label=${label}>${icon(name)}${drop ? icon("caretG") : nothing}</button>`;
  }
  render() {
    return html`
      <section class="group">
        <div class="body clip">
          <button class="big"><span class="art">${icon("paste")}</span><span>Colar</span>${icon("caret")}</button>
          <div class="off">${this.rows([["cut", "Recortar"], ["copy", "Copiar", "caretG+"], ["brush", "Pincel de Formatação"]])}</div>
        </div>
        ${this.foot("Área de Transferência", "launcher")}
      </section>
      <section class="group">
        <div class="body slides">
          <button class="big"><span class="art">${icon("newSlide")}</span><span>Novo</span><span class="caption">Slide${icon("caret")}</span></button>
          ${this.rows([["layout", "Layout", "caret"], ["reset", "Redefinir"], ["section", "Seção", "caret"]])}
        </div>
        ${this.foot("Slides")}
      </section>
      <section class="group">
        <div class="body tools font">
          <div class="line">
            <label class="combo family"><select aria-label="Fonte"><option></option></select>${icon("caretG")}</label>
            <label class="combo size"><select aria-label="Tamanho da fonte"><option>12</option></select>${icon("caretG")}</label>
            ${this.tool("growA", "Aumentar fonte")}${this.tool("shrinkA", "Diminuir fonte")}<span class="rule"></span>${this.tool("eraser", "Limpar formatação")}
          </div>
          <div class="line marks">
            <button class="letter bold">N</button><button class="letter italic">I</button><button class="letter under">S</button><button class="letter shade">S</button>
            <button class="strike">abc</button>${this.tool("spacingAV", "Espaçamento", true)}
            <button class="drop">Aa${icon("caretG")}</button><span class="rule"></span><button class="drop bold">A${icon("caretG")}</button>
          </div>
        </div>
        ${this.foot("Fonte", "launcherG")}
      </section>
      <section class="group">
        <div class="body">
          <div class="body tools para">
            <div class="line">
              ${this.tool("bullets", "Marcadores", true)}${this.tool("numbers", "Numeração", true)}<span class="rule"></span>
              ${this.tool("outdent", "Diminuir recuo")}${this.tool("indent", "Aumentar recuo")}<span class="rule"></span>${this.tool("lineSpace", "Espaçamento entre linhas", true)}
            </div>
            <div class="line">
              ${this.tool("alignL", "Alinhar à esquerda")}${this.tool("alignC", "Centralizar")}${this.tool("alignR", "Alinhar à direita")}${this.tool("alignJ", "Justificar")}
              <span class="rule"></span>${this.tool("columns", "Colunas", true)}
            </div>
          </div>
          <div class="off">${this.rows([["textDir", "Direção do Texto", "caretG"], ["alignText", "Alinhar Texto", "caretG"], ["smartArt", "Converter em SmartArt", "caretG"]])}</div>
        </div>
        ${this.foot("Parágrafo", "launcherG")}
      </section>
      <section class="group">
        <div class="body draw">
          <div class="gallery">
            <div class="shapes">${SHAPES.map((s, i) => html`<button aria-label="Forma ${i + 1}"><svg class="icon" width="18" height="18" viewBox="0 0 18 18">${s}</svg></button>`)}</div>
            <div class="more"><button aria-label="Acima">${icon("caretUp")}</button><button aria-label="Abaixo">${icon("caret")}</button><button aria-label="Mais">${icon("customize")}</button></div>
          </div>
          <button class="big"><span class="art">${icon("arrange")}</span><span>Organizar</span>${icon("caret")}</button>
          <button class="big off"><span class="art">${icon("styles")}</span><span>Estilos</span><span class="caption">Rápidos${icon("caretG")}</span></button>
          <div class="off">${this.rows([["fill", "Preenchimento da Forma", "caretG"], ["outline", "Contorno da Forma", "caretG"], ["effects", "Efeitos de Forma", "caretG"]])}</div>
        </div>
        ${this.foot("Desenho", "launcherG")}
      </section>
      <section class="group">
        <div class="body edit">${this.rows([["find", "Localizar"], ["replace", "Substituir", "caret+"], ["select", "Selecionar", "caret"]])}</div>
        ${this.foot("Edição")}
      </section>
      <div class="end"><button aria-label="Recolher faixa">${icon("collapse")}</button></div>`;
  }
}

/* --------------------------------------------------------------- scrollbar */

@customElement("scroll-rail")
class ScrollRail extends LitElement {
  @property({ type: Number }) before = 0;
  @property({ type: Number }) size = 1;
  static styles = [base, css`
    :host { display: flex; flex-direction: column; width: 15px; min-height: 0; background: #f0f0f0; }
    button { height: 15px; flex: none; background: #fff; border: 1px solid #ababab; }
    .track { flex: 1; display: flex; flex-direction: column; }
    .thumb { background: #fff; border: 1px solid #ababab; }
  `];
  render() {
    return html`
      <button aria-label="Rolar para cima">${icon("up")}</button>
      <div class="track">
        <div style=${styleMap({ flex: String(this.before) })}></div>
        <div class="thumb" style=${styleMap({ flex: String(this.size) })}></div>
      </div>
      <button aria-label="Rolar para baixo">${icon("down")}</button>`;
  }
}

/* -------------------------------------------------------------- thumbnails */

@customElement("slide-list")
class SlideList extends LitElement {
  @state() private selected = 6;
  static styles = [base, css`
    :host { display: flex; flex-direction: column; justify-content: flex-end; gap: 18px; min-height: 0; overflow: hidden; padding-bottom: 26px; }
    button { flex: none; justify-content: flex-start; align-items: flex-start; gap: 5px; padding-left: 12px; font-size: 16px; line-height: 12px; height: 128px; }
    .num { width: 9px; }
    .sheet { width: 225px; height: 128px; background: #fff; border: 1px solid #c0c0c0; overflow: hidden; }
    .sheet svg { display: block; width: 100%; height: 100%; }
    .on { color: #d24726; }
    .on .sheet { outline: 3px solid #f0704f; outline-offset: -1px; }
    text { font-family: Lato, sans-serif; fill: #333; }
    .m-title { font-size: 27px; text-anchor: middle; fill: #111; }
    .m-head { font-size: 9px; font-weight: 700; text-anchor: middle; }
    .m-mid { font-size: 9px; text-anchor: middle; }
    .m-note { font-size: 8px; }
    .m-side { font-size: 20px; fill: #2f5fae; }
    .m-side.tight { font-size: 16px; }
    .m-blue { font-size: 12px; text-anchor: middle; fill: #2f5fae; }
    .m-line { font-size: 10px; fill: #555; }
    .m-line.dark { fill: #111; }
    .m-line.red { fill: #f01010; }
    .white { fill: #fff; }
  `];
  render() {
    return THUMBS.map(([n, art]) => html`
      <button class=${classMap({ on: n === this.selected })} @click=${() => (this.selected = n)} aria-label="Slide ${n}">
        <span class="num">${n}</span><span class="sheet"><svg viewBox="3 3 669 378">${art}</svg></span>
      </button>`);
  }
}

/* ------------------------------------------------------------------ rulers */

@customElement("slide-ruler")
class SlideRuler extends LitElement {
  @property({ type: Boolean, reflect: true }) upright = false;
  static styles = [base, css`
    :host { display: block; background: #fff; border: 1px solid #e1e1e1; overflow: hidden; color: #555; font-size: 11px; line-height: 13px; }
    .scale { display: flex; height: 13px; padding: 0 2px; }
    .scale > span { flex: 1 1 0; min-width: 0; min-height: 0; display: flex; align-items: center; justify-content: center; }
    .dot { width: 1px; height: 2px; background: #999; flex: none; }
    .half { width: 1px; height: 5px; background: #999; flex: none; }
    :host([upright]) .scale { flex-direction: column; width: 13px; height: calc(100% + 10px); margin: -4px 0 -6px; padding: 0; }
    :host([upright]) .dot { width: 2px; height: 1px; }
    :host([upright]) .half { width: 5px; height: 1px; }
    :host([upright]) .n { writing-mode: vertical-rl; rotate: 180deg; }
  `];
  render() {
    const end = this.upright ? 38 : 67;
    const marks = Array.from({ length: end * 2 + 1 }, (_, i) => Math.abs(i - end));
    return html`<div class="scale">${marks.map((q) => html`<span>${q % 4 === 0 ? html`<span class="n">${q / 4}</span>`
      : q % 2 === 0 ? html`<i class="half"></i>` : html`<i class="dot"></i>`}</span>`)}</div>`;
  }
}

/* ------------------------------------------------------------ slide canvas */

@customElement("slide-canvas")
class SlideCanvas extends LitElement {
  static styles = [base, css`
    :host { display: block; position: relative; background: #fff; border: 1px solid #c3c3c3; color: #000; font-family: Lato, "Open Sans", sans-serif;
      font-variant-ligatures: none; font-kerning: none; }
    .backdrop, .panel, .title, .step, .note, .connector, .guide { position: absolute; }
    .backdrop { border: 1px solid #c5deb5; background: #fff; }
    .panel { background: #e2efd9; border-radius: 75px; inset: 0 1px 0 0; }
    .guide { border-top: 1px dashed #777; }
    .title { margin: 0; display: flex; align-items: center; justify-content: center; font-size: 56px; font-weight: 400; line-height: 64px; }
    .step { display: flex; flex-direction: column; justify-content: center; gap: 8px; background: #fff; border: 2px solid #e6ac00; text-align: center;
      padding-bottom: 2px; font-size: 19px; line-height: 24px; white-space: nowrap; }
    .step h2, .step p { margin: 0 -20px; font-size: inherit; }
    .line { display: block; }
    .spell { text-decoration: underline wavy #e33 1px; text-underline-offset: 1px; text-decoration-skip-ink: none; }
    .title .spell { text-underline-offset: 0; }
    .link { color: #0563c1; text-decoration: underline; text-decoration-skip-ink: none; text-underline-offset: 3px; }
    .bold { font-weight: 700; }
    .note { display: flex; flex-direction: column; justify-content: center; background: #ffe599; border: 2px solid #ed7d31; padding-left: 10px;
      font-size: 17px; line-height: 22px; white-space: nowrap; text-shadow: 1px 2px 2px rgba(0, 0, 0, 0.3); }
    .connector svg { display: block; width: 100%; height: 100%; overflow: visible; }
  `];
  private runs(l: Line) {
    return l.map((r) => (r.kind === "link" ? html`<a class="link" href=${r.t}>${r.t}</a>` : r.kind ? html`<span class=${r.kind}>${r.t}</span>` : r.t));
  }
  render() {
    return html`
      <div class="backdrop" style=${styleMap(place(81, 9, 1261, 776))}><div class="panel"></div></div>
      <div class="guide" style=${styleMap(place(1327, 43, 14, 1))}></div>
      <h1 class="title" style=${styleMap(place(500, 90, 420, 64))}><span class="spell">Submission</span></h1>
      ${STEPS.map((s) => html`
        <section class="step" style=${styleMap({ ...place(s.x, s.y, s.w, s.h), borderRadius: `${s.r}px` })}>
          <h2>${this.runs(s.title)}</h2>
          <p>${s.body.map((l) => html`<span class="line">${this.runs(l)}</span>`)}</p>
        </section>`)}
      <div class="connector" style=${styleMap(place(1150, 480, 52, 75))}>
        <svg viewBox="0 0 52 75" preserveAspectRatio="none"><path d="M51 0 1 75" stroke="#ed7d31" stroke-width="2" fill="none"/></svg>
      </div>
      <aside class="note" style=${styleMap(place(1218, 445, 213, 178))}>${NOTE.map((l) => html`<span>${l}</span>`)}</aside>`;
  }
}

/* -------------------------------------------------------------- status bar */

@customElement("status-bar")
class StatusBar extends LitElement {
  static styles = [base, css`
    :host { display: flex; align-items: center; height: 22px; padding: 0 7px; background: #d24726; color: #fff; font-size: 11px; }
    .left, .right, .views, .zoom { display: flex; align-items: center; }
    .left { gap: 17px; }
    .right { margin-left: auto; }
    .label { gap: 5px; margin-right: 18px; }
    .views button { width: 38px; height: 22px; }
    .views .on { background: #b7381b; }
    .zoom { gap: 4px; margin-left: 4px; }
    .zoom button { width: 8px; }
    .minus { width: 6px; height: 2px; background: #fff; }
    .plus { width: 8px; height: 8px; background: linear-gradient(#fff, #fff) center / 8px 2px no-repeat, linear-gradient(#fff, #fff) center / 2px 8px no-repeat; }
    input { appearance: none; width: 100px; height: 12px; background: linear-gradient(#fff, #fff) center / 100% 1px no-repeat; }
    input::-webkit-slider-thumb { appearance: none; width: 4px; height: 12px; background: #fff; }
    output { margin: 0 9px 0 10px; }
  `];
  render() {
    return html`
      <div class="left"><span>SLIDE 6 DE 6</span><button aria-label="Revisão de texto">${icon("proof")}</button><span>PORTUGUÊS (BRASIL)</span></div>
      <div class="right">
        <button class="label">${icon("notes")}ANOTAÇÕES</button>
        <button class="label">${icon("comments")}COMENTÁRIOS</button>
        <div class="views">${[["normal", "Normal"], ["sorter", "Classificação"], ["reading", "Leitura"], ["slideshow", "Apresentação"]]
          .map(([i, l], n) => html`<button class=${classMap({ on: n === 0 })} aria-label=${l}>${icon(i)}</button>`)}</div>
        <div class="zoom">
          <button aria-label="Reduzir"><i class="minus"></i></button>
          <input type="range" min="0" max="100" .value=${"53"} aria-label="Zoom">
          <button aria-label="Ampliar"><i class="plus"></i></button>
          <output>113%</output>${icon("fit")}
        </div>
      </div>`;
  }
}

/* ----------------------------------------------------------------- taskbar */

@customElement("task-bar")
class TaskBar extends LitElement {
  static styles = [base, css`
    :host { display: flex; align-items: center; height: 40px; background: #060b12; color: #fff; font-size: 11px; padding-right: 4px; }
    .sys, .apps { display: flex; }
    .sys { margin-right: 2px; }
    .sys button { width: 48px; height: 40px; }
    .apps button { width: 49px; height: 40px; border-top: 2px solid transparent; border-bottom: 2px solid transparent; position: relative; }
    .open { background: linear-gradient(#76b9ed, #76b9ed) center bottom / 40px 2px no-repeat border-box; }
    .current { background: linear-gradient(#76b9ed, #76b9ed) center bottom / 100% 2px no-repeat border-box, #3a3f44; }
    .mark { position: absolute; font-size: 15px; font-weight: 700; line-height: 36px; left: 12px; width: 15px; top: 0; text-align: center; }
    .mark.solo { left: 12px; width: 24px; font-size: 19px; }
    .tray { margin-left: auto; display: flex; align-items: center; gap: 8px; height: 40px; }
    .tray .first { margin-right: 14px; }
    .clock { text-align: center; line-height: 18px; width: 60px; }
    .center { position: relative; margin: 4px 5px 0 8px; }
    .center .count { position: absolute; right: 5px; bottom: 0; font-size: 12px; line-height: 17px; font-weight: 600; }
    .edge { width: 1px; height: 40px; background: #6b6f74; }
  `];
  render() {
    const apps: [string, string, string?, string?][] = [["edge", ""], ["explorer", "open"], ["store", ""], ["chrome", "open"], ["excel", "open", "X"],
      ["skype", "open", "S", "solo"], ["word", "open", "W"], ["notepad", "open"], ["pptBig", "current", "P"]];
    return html`
      <div class="sys">${["windows", "cortana", "taskview"].map((i) => html`<button aria-label=${i}>${icon(i)}</button>`)}</div>
      <div class="apps">${apps.map(([i, c, m, k]) => html`<button class=${c} aria-label=${i}>${icon(i)}${m ? html`<span class="mark ${k ?? ""}">${m}</span>` : nothing}</button>`)}</div>
      <div class="tray">
        <button class="first" aria-label="Pessoas">${icon("people")}</button>
        ${["chevron", "teamviewer", "defender", "network", "volume"].map((i) => html`<button aria-label=${i}>${icon(i)}</button>`)}
        <time class="clock">13:53<br>07/06/2018</time>
        <button class="center" aria-label="Notificações">${icon("action")}<span class="count">2</span></button>
        <i class="edge"></i>
      </div>`;
  }
}

/* --------------------------------------------------------------------- app */

@customElement("app-root")
class AppRoot extends LitElement {
  static styles = [base, css`
    :host { display: flex; flex-direction: column; height: 100vh; overflow: hidden; background: #fff; color: #444;
      font-family: "Open Sans", "Noto Sans", sans-serif; }
    .work { flex: 1; min-height: 0; display: flex; background: linear-gradient(#fdfdfd, #eeeeee); }
    .nav { display: flex; width: 291px; border-right: 1px solid #d0d0d0; }
    slide-list { width: 271px; }
    .nav scroll-rail { margin: 2px 0; }
    .editor { flex: 1; min-width: 0; display: flex; gap: 0; margin: 0 1px 2px 2px; border-bottom: 1px solid #cfcfcf; }
    .stage { flex: 1; min-width: 0; display: grid; grid-template-columns: 15px 1fr; grid-template-rows: 15px 1fr; column-gap: 79px; row-gap: 23px;
      padding: 4px 71px 18px 4px; }
    .across { grid-column: 2; margin-left: 2px; }
    .rail { display: flex; flex-direction: column; padding: 2px 0 25px; }
    .rail scroll-rail { flex: 1; }
    .pager { display: grid; justify-items: center; gap: 10px; padding-top: 5px; width: 15px; }
  `];
  render() {
    return html`
      <title-bar></title-bar>
      <ribbon-tabs></ribbon-tabs>
      <ribbon-bar></ribbon-bar>
      <main class="work">
        <div class="nav"><slide-list></slide-list><scroll-rail .before=${25} .size=${816}></scroll-rail></div>
        <div class="editor">
          <div class="stage">
            <slide-ruler class="across"></slide-ruler>
            <slide-ruler upright></slide-ruler>
            <slide-canvas></slide-canvas>
          </div>
          <div class="rail">
            <scroll-rail .before=${653} .size=${131}></scroll-rail>
            <div class="pager"><button aria-label="Slide anterior">${icon("pageUp")}</button><button aria-label="Próximo slide">${icon("pageDown")}</button></div>
          </div>
        </div>
      </main>
      <status-bar></status-bar>
      <task-bar></task-bar>`;
  }
}
